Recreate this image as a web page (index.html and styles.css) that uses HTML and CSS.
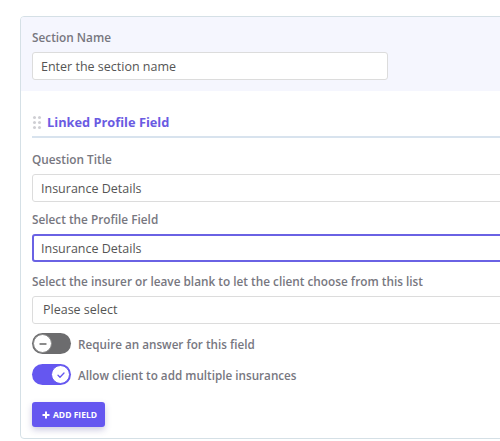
FILE: index.html
```html
<!DOCTYPE html>
<html lang="en">
<head>
<meta charset="utf-8"/>
<meta content="width=device-width, initial-scale=1.0" name="viewport"/>
<title>Section Editor</title>
<link rel="stylesheet" href="styles.css">
</head>
<body>
<div class="section-card">
    <div class="section-head">
        <label class="field-label" for="section-name">Section Name</label>
        <input class="text-input short" id="section-name" type="text" placeholder="Enter the section name">
    </div>
    <div class="section-body">
        <div class="field-title">
            <span class="drag-handle"><i></i><i></i><i></i><i></i><i></i><i></i></span>
            <span>Linked Profile Field</span>
        </div>
        <label class="field-label">Question Title</label>
        <input class="text-input" type="text" value="Insurance Details">
        <label class="field-label">Select the Profile Field</label>
        <input class="text-input focused" type="text" value="Insurance Details">
        <label class="field-label">Select the insurer or leave blank to let the client choose from this list</label>
        <div class="text-input select">Please select</div>

        <div class="toggle-row">
            <span class="toggle">
                <span class="knob">
                    <svg width="10" height="10" viewBox="0 0 10 10"><path d="M2 5h6" stroke="#666" stroke-width="1.4" stroke-linecap="round"/></svg>
                </span>
            </span>
            <span class="toggle-text">Require an answer for this field</span>
        </div>
        <div class="toggle-row">
            <span class="toggle on">
                <span class="knob">
                    <svg width="10" height="10" viewBox="0 0 10 10"><path d="M2 5.2l2 2 4-4.2" fill="none" stroke="#6557f0" stroke-width="1.3" stroke-linecap="round" stroke-linejoin="round"/></svg>
                </span>
            </span>
            <span class="toggle-text">Allow client to add multiple insurances</span>
        </div>

        <button class="add-btn" type="button">
            <svg width="8" height="8" viewBox="0 0 8 8"><path d="M4 0.5v7M0.5 4h7" stroke="#fff" stroke-width="2"/></svg>
            ADD FIELD
        </button>
    </div>
</div>
</body>
</html>
```
FILE: styles.css
```css
html, body {
    overflow: hidden;
}
body {
    margin: 0;
    padding: 16px 0 0 20px;
    font-family: 'Open Sans', sans-serif;
    background-color: #fff;
    color: #555;
}
.section-card {
    width: 560px;
    border: 1px solid #d5e0e6;
    border-radius: 4px;
    background: #fff;
    overflow: hidden;
}
.section-head {
    background-color: #f5f6fe;
    padding: 12px 11px 11px 11px;
}
.section-body {
    padding: 22px 11px 11px 11px;
}
.field-label {
    display: block;
    font-size: 11.8px;
    font-weight: 600;
    color: #77777f;
    line-height: 16px;
    margin-bottom: 7px;
}
.text-input {
    display: block;
    box-sizing: border-box;
    width: 100%;
    height: 28px;
    border: 1px solid #dcdcdc;
    border-radius: 3px;
    padding: 0 8px;
    font-family: inherit;
    font-size: 12.5px;
    color: #555;
    background: #fff;
    margin-bottom: 9px;
    outline: none;
}
.text-input::placeholder {
    color: #555;
}
.text-input.short {
    width: 356px;
    margin-bottom: 0;
}
.text-input.focused {
    border: 2px solid #6a62e4;
    padding: 0 7px;
    margin-bottom: 11px;
}
.text-input.select {
    line-height: 26px;
    padding-left: 10px;
    margin-bottom: 0;
}
.field-title {
    display: flex;
    align-items: center;
    gap: 6px;
    color: #6a5be2;
    font-size: 12.8px;
    font-weight: 700;
    padding-bottom: 5px;
    border-bottom: 2px solid #d8e3ee;
    margin-bottom: 13px;
}
.drag-handle {
    display: grid;
    grid-template-columns: 3px 3px;
    gap: 2px 2px;
    padding-left: 1px;
}
.drag-handle i {
    width: 3px;
    height: 3px;
    border-radius: 50%;
    background: #cfcfd4;
}
.toggle-row {
    display: flex;
    align-items: center;
    gap: 7px;
    margin-top: 9px;
}
.toggle-row + .toggle-row {
    margin-top: 10px;
}
.toggle {
    position: relative;
    display: inline-block;
    width: 39px;
    height: 21px;
    border-radius: 11px;
    background: #6c6c6e;
}
.toggle .knob {
    position: absolute;
    top: 1px;
    left: 1px;
    box-sizing: border-box;
    width: 19px;
    height: 19px;
    border-radius: 50%;
    background: #fff;
    border: 1.5px solid #8a8a8a;
    display: flex;
    align-items: center;
    justify-content: center;
}
.toggle.on {
    background: #6557f0;
}
.toggle.on .knob {
    left: auto;
    right: 1px;
    border-color: #6557f0;
}
.toggle-text {
    font-size: 11.7px;
    font-weight: 600;
    color: #77777f;
}
.add-btn {
    display: flex;
    align-items: center;
    gap: 3px;
    margin-top: 17px;
    height: 25px;
    padding: 0 8px 0 10px;
    border: none;
    border-radius: 3px;
    background: #6557f0;
    color: #fff;
    font-family: 'Open Sans', sans-serif;
    font-size: 8.5px;
    font-weight: 700;
    box-shadow: 0 3px 6px rgba(60, 50, 140, 0.25);
}
```
